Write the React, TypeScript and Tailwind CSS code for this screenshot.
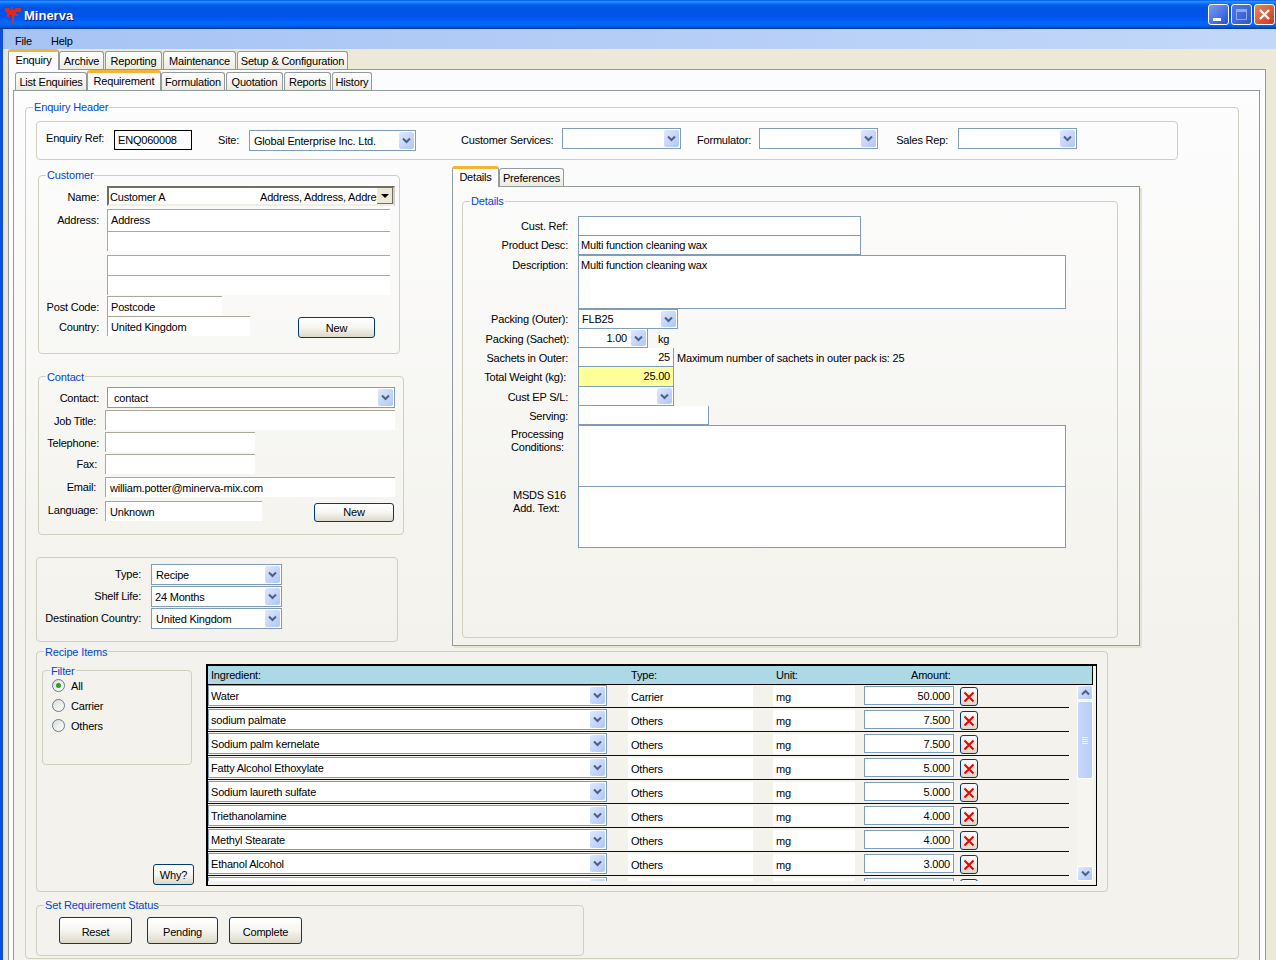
import React from 'react';

const cx = (...c: (string | undefined)[]) => c.filter(Boolean).join(' ');

function Chevron({ up = false }: { up?: boolean }) {
  return (
    <svg width="9" height="7" viewBox="0 0 9 7" className={up ? 'rotate-180' : ''}>
      <path d="M1 1.5 L4.5 5 L8 1.5" fill="none" stroke="#4d6185" strokeWidth="2" />
    </svg>
  );
}

function Combo({ className, text, textClass = 'pl-[2px]' }: { className?: string; text?: string; textClass?: string }) {
  return (
    <div className={cx('flex items-center bg-white border border-[#7f9db9] p-px', className)}>
      <span className={cx('flex-1 min-w-0 overflow-hidden whitespace-nowrap pt-px', textClass)}>{text}</span>
      <span className="flex items-center justify-center w-[15px] h-full shrink-0 rounded-[2px] bg-gradient-to-br from-[#dfe8fd] to-[#b0c6f6]">
        <Chevron />
      </span>
    </div>
  );
}

function Sunken({ className, text }: { className?: string; text?: string }) {
  return (
    <div className={cx('flex items-center bg-white border-t border-l border-[#aca899] whitespace-nowrap', className ?? '')}>
      {text}
    </div>
  );
}

function Box({ className, text }: { className?: string; text?: string }) {
  return (
    <div className={cx('bg-white border border-[#7f9db9] px-[2px] whitespace-nowrap', className)}>
      {text}
    </div>
  );
}

function Label({ className, text }: { className?: string; text: string }) {
  return <div className={cx('text-right whitespace-nowrap shrink-0', className)}>{text}</div>;
}

function Button({ className, text }: { className?: string; text: string }) {
  return (
    <div className={cx('flex items-center justify-center border border-[#003c74] rounded-[3px] bg-gradient-to-b from-white via-[#f6f5f0] to-[#dcd8ca]', className)}>
      {text}
    </div>
  );
}

function Group({ title, className, high, children }: { title: string; className?: string; high?: boolean; children?: React.ReactNode }) {
  return (
    <fieldset className={cx('block border border-[#d0d0bf] rounded-[4px] min-w-0', className)}>
      <legend className={cx('ml-[7px] pl-px pr-px text-[#0046d5] tracking-[-0.15px] whitespace-nowrap', high ? 'pt-px leading-[13px]' : 'pt-[2px] leading-[12px]')}>{title}</legend>
      {children}
    </fieldset>
  );
}

function Tab({ text, active, className }: { text: string; active?: boolean; className?: string }) {
  if (active) {
    return (
      <div className={cx('relative z-10 -mb-px flex items-center justify-center pb-[2px] border-x border-[#919b9c] rounded-t-[3px] bg-[#fcfcfe] border-t-[3px] border-t-[#f5b432] whitespace-nowrap', className)}>
        {text}
      </div>
    );
  }
  return (
    <div className={cx('flex items-center justify-center border-x border-t border-[#919b9c] rounded-t-[3px] bg-gradient-to-b from-white to-[#ecebe0] whitespace-nowrap self-end', className)}>
      {text}
    </div>
  );
}

function Radio({ text, checked }: { text: string; checked?: boolean }) {
  return (
    <div className="flex items-center h-4 mb-1 pl-[9px]">
      <span className="flex items-center justify-center w-[13px] h-[13px] rounded-full border border-[#5d7e9c] bg-gradient-to-br from-[#dcdcd5] to-white">
        {checked && <span className="w-[5px] h-[5px] rounded-full bg-[#21a121]" />}
      </span>
      <span className="ml-[6px] pt-px">{text}</span>
    </div>
  );
}

const items = [
  ['Water', 'Carrier', '50.000'],
  ['sodium palmate', 'Others', '7.500'],
  ['Sodium palm kernelate', 'Others', '7.500'],
  ['Fatty Alcohol Ethoxylate', 'Others', '5.000'],
  ['Sodium laureth sulfate', 'Others', '5.000'],
  ['Triethanolamine', 'Others', '4.000'],
  ['Methyl Stearate', 'Others', '4.000'],
  ['Ethanol Alcohol', 'Others', '3.000'],
  ['', '', ''],
];

function ItemRow({ name, type, amount }: { name: string; type: string; amount: string }) {
  return (
    <div className="flex items-start w-[861px] h-[23px] mb-px border-b border-[#000080]">
      <Combo className="w-[399px] h-[21px]" text={name} textClass="pl-px" />
      <div className="ml-[21px] mt-px pl-[3px] pt-[2px] flex items-center w-[125px] h-[20px] bg-white">{type}</div>
      <div className="ml-[20px] mt-px pl-[3px] pt-[2px] flex items-center w-[82px] h-[20px] bg-white">{type ? 'mg' : ''}</div>
      <div className="ml-[9px] mt-px pr-[3px] w-[90px] h-[19px] text-right bg-white border border-[#7f9db9] leading-[18px]">{amount}</div>
      <div className="ml-[6px] mt-[2px] flex items-center justify-center w-[18px] h-[19px] rounded-[3px] border border-[#003c74] bg-gradient-to-b from-white to-[#dcd8ca]">
        <svg width="12" height="12" viewBox="0 0 12 12">
          <path d="M1.5 1.5 L10.5 10.5 M10.5 1.5 L1.5 10.5" stroke="#f00000" strokeWidth="2" />
        </svg>
      </div>
    </div>
  );
}

function ScrollBtn({ up }: { up?: boolean }) {
  return (
    <div className="flex items-center justify-center h-[15px] rounded-[2px] border border-white bg-gradient-to-br from-[#dfe8fd] to-[#b0c6f6]">
      <Chevron up={up} />
    </div>
  );
}

function WinBtn({ className, children }: { className?: string; children?: React.ReactNode }) {
  return (
    <div className={cx('flex items-center justify-center w-[21px] h-[21px] rounded-[3px] border border-white', className)}>
      {children}
    </div>
  );
}

export default function App() {
  return (
    <div className="flex flex-col w-[1276px] h-[960px] overflow-hidden text-black text-[11px] tracking-[-0.2px] leading-[14px] [font-family:'Liberation_Sans',sans-serif]">
      {/* title bar */}
      <div className="flex items-center h-[29px] pl-[5px] pr-px shrink-0 bg-[linear-gradient(to_bottom,#0058ee_0%,#3593ff_6%,#127dff_10%,#0262ee_16%,#0054e3_28%,#0055eb_56%,#005bf5_68%,#026afe_78%,#0062ef_88%,#0052d6_94%,#003092_100%)]">
        <svg width="16" height="18" viewBox="0 0 16 18" className="shrink-0 mt-px">
          <path d="M0 2h5v2h1V1h2v3h2V2h6v4h-5v2h2v2H9v8H7V9H4v2H2V6H0z" fill="#e0281f" />
        </svg>
        <span className="ml-[3px] mt-[3px] text-[13px] tracking-[0px] font-bold text-white [text-shadow:1px_1px_#0f1089]">Minerva</span>
        <div className="ml-auto flex gap-[2px]">
          <WinBtn className="bg-gradient-to-br from-[#7c9bf0] to-[#2450d8]">
            <span className="mt-[9px] mr-[3px] w-[8px] h-[3px] bg-white" />
          </WinBtn>
          <WinBtn className="border-[#7b9fe8] bg-gradient-to-br from-[#5279e4] to-[#2f58cf]">
            <span className="w-[11px] h-[11px] border border-[#8fa8ea] border-t-[3px]" />
          </WinBtn>
          <WinBtn className="bg-gradient-to-br from-[#e9855f] to-[#c7341a]">
            <svg width="13" height="13" viewBox="0 0 13 13">
              <path d="M2 2 L11 11 M11 2 L2 11" stroke="#fff" strokeWidth="2.4" />
            </svg>
          </WinBtn>
        </div>
      </div>

      <div className="flex flex-1 min-h-0">
        <div className="w-[3px] shrink-0 bg-[#0b50e6]" />
        <div className="flex flex-col flex-1 min-w-0">
          {/* menu */}
          <div className="flex items-center h-[20px] pl-[12px] pt-[4px] gap-[19px] shrink-0 bg-gradient-to-r from-[#a6c3f4] to-[#c3d8f9]">
            <span>File</span>
            <span>Help</span>
          </div>

          <div className="flex flex-col flex-1 min-h-0 pl-[5px] pr-[10px] bg-[#ece9d8]">
            {/* outer tabs */}
            <div className="flex h-[20px] shrink-0 gap-px">
              <Tab text="Enquiry" active className="w-[51px] h-[21px] -mr-px" />
              <Tab text="Archive" className="w-[45px] h-[18px]" />
              <Tab text="Reporting" className="w-[57px] h-[18px]" />
              <Tab text="Maintenance" className="w-[73px] h-[18px]" />
              <Tab text="Setup & Configuration" className="w-[111px] h-[18px]" />
            </div>

            <div className="flex-1 min-h-0 pl-[4px] pr-[5px] border border-[#919b9c] border-b-0 bg-[#fcfcfe]">
              {/* inner tabs */}
              <div className="flex h-[20px] gap-px pl-[2px]">
                <Tab text="List Enquiries" className="w-[72px] h-[18px] -mr-px" />
                <Tab text="Requirement" active className="w-[74px] h-[20px] -mr-px" />
                <Tab text="Formulation" className="w-[64px] h-[18px]" />
                <Tab text="Quotation" className="w-[57px] h-[18px]" />
                <Tab text="Reports" className="w-[47px] h-[18px]" />
                <Tab text="History" className="w-[40px] h-[18px]" />
              </div>

              <div className="h-[880px] pl-[11px] pt-[9px] border border-[#919b9c] border-b-0 bg-[linear-gradient(to_bottom,#fdfdfe,#f3f2ec_62%)]">
                <Group title="Enquiry Header" high className="w-[1214px] h-[859px]">
                  {/* header strip */}
                  <div className="flex items-start ml-[10px] mt-[7px] w-[1142px] h-[39px] border border-[#d0d0bf] rounded-[4px]">
                    <Label text="Enquiry Ref:" className="ml-[9px] mt-[9px] w-[58px]" />
                    <div className="ml-[10px] mt-[8px] w-[78px] h-[20px] pl-[3px] border border-black leading-[18px]">ENQ060008</div>
                    <Label text="Site:" className="ml-[26px] mt-[11px] w-[21px]" />
                    <Combo className="ml-[10px] mt-[8px] w-[167px] h-[21px]" text="Global Enterprise Inc. Ltd." textClass="pl-[3px]" />
                    <Label text="Customer Services:" className="ml-[45px] mt-[11px] w-[91px]" />
                    <Combo className="ml-[10px] mt-[6px] w-[119px] h-[21px]" />
                    <Label text="Formulator:" className="ml-[16px] mt-[11px] w-[52px]" />
                    <Combo className="ml-[10px] mt-[6px] w-[119px] h-[21px]" />
                    <Label text="Sales Rep:" className="ml-[18px] mt-[11px] w-[52px]" />
                    <Combo className="ml-[10px] mt-[6px] w-[119px] h-[21px]" />
                  </div>

                  <div className="flex h-[484px]">
                    {/* left column */}
                    <div className="w-[426px] pt-[8px] shrink-0">
                      <Group title="Customer" high className="ml-[12px] w-[362px] h-[186px]">
                        <div className="pt-[4px]">
                          <div className="flex items-center h-[20px]">
                            <Label text="Name:" className="w-[60px] pt-px" />
                            <div className="relative flex items-center ml-[8px] w-[288px] h-[20px] bg-white border-2 border-t-[#716f64] border-l-[#716f64] border-r-[#d4d0c8] border-b-[#f1efe2]">
                              <span className="pl-px pt-px">Customer A</span>
                              <span className="absolute left-[151px] right-[16px] top-[2px] overflow-hidden whitespace-nowrap">Address, Address, Address</span>
                              <span className="absolute right-0 top-0 flex items-center justify-center w-[16px] h-[16px] bg-[#ece9d8] border-r border-b border-[#716f64]">
                                <span className="border-x-[4px] border-x-transparent border-t-[4px] border-t-black" />
                              </span>
                            </div>
                          </div>
                          <div className="flex items-center h-[22px] mt-[3px]">
                            <Label text="Address:" className="w-[60px] -mt-px" />
                            <Sunken className="ml-[8px] pl-[3px] pb-[2px] w-[283px] h-[22px]" text="Address" />
                          </div>
                          <Sunken className="ml-[68px] w-[283px] h-[20px]" />
                          <Sunken className="ml-[68px] mt-[4px] w-[283px] h-[20px]" />
                          <Sunken className="ml-[68px] w-[283px] h-[20px]" />
                          <div className="flex items-center h-[20px] mt-px">
                            <Label text="Post Code:" className="w-[60px] pt-px" />
                            <Sunken className="ml-[8px] pl-[3px] w-[115px] h-[20px]" text="Postcode" />
                          </div>
                          <div className="flex items-center h-[20px]">
                            <Label text="Country:" className="w-[60px] pt-px" />
                            <Sunken className="ml-[8px] pl-[3px] w-[143px] h-[20px]" text="United Kingdom" />
                            <Button text="New" className="ml-[48px] mt-[2px] pt-px w-[77px] h-[21px] shrink-0" />
                          </div>
                        </div>
                      </Group>

                      <Group title="Contact" className="ml-[12px] mt-[15px] w-[366px] h-[166px]">
                        <div className="pt-[4px]">
                          <div className="flex items-center h-[21px]">
                            <Label text="Contact:" className="w-[60px]" />
                            <Combo className="ml-[8px] w-[288px] h-[21px]" text="contact" textClass="pl-[5px]" />
                          </div>
                          <div className="flex items-center h-[20px] mt-[2px]">
                            <Label text="Job Title:" className="w-[57px] pt-px" />
                            <Sunken className="ml-[9px] w-[290px] h-[20px]" />
                          </div>
                          <div className="flex items-center h-[20px] mt-[2px]">
                            <Label text="Telephone:" className="w-[60px] pt-[2px]" />
                            <Sunken className="ml-[6px] w-[150px] h-[20px]" />
                          </div>
                          <div className="flex items-center h-[20px] mt-[2px]">
                            <Label text="Fax:" className="w-[58px] -mt-px" />
                            <Sunken className="ml-[8px] w-[150px] h-[20px]" />
                          </div>
                          <div className="flex items-center h-[20px] mt-[3px]">
                            <Label text="Email:" className="w-[57px]" />
                            <Sunken className="ml-[9px] pl-[4px] w-[290px] h-[20px]" text="william.potter@minerva-mix.com" />
                          </div>
                          <div className="flex items-center h-[20px] mt-[4px]">
                            <Label text="Language:" className="w-[59px] -mt-[3px]" />
                            <Sunken className="ml-[7px] pl-[4px] w-[157px] h-[20px]" text="Unknown" />
                            <Button text="New" className="ml-[52px] mt-[2px] w-[80px] h-[19px] shrink-0" />
                          </div>
                        </div>
                      </Group>

                      <div className="ml-[10px] mt-[22px] w-[362px] h-[85px] pt-[6px] border border-[#d0d0bf] rounded-[4px]">
                        <div className="flex items-center h-[21px]">
                          <Label text="Type:" className="w-[104px] -mt-[1px]" />
                          <Combo className="ml-[10px] w-[131px] h-[21px]" text="Recipe" textClass="pl-[3px]" />
                        </div>
                        <div className="flex items-center h-[21px] mt-px">
                          <Label text="Shelf Life:" className="w-[104px] -mt-[1px]" />
                          <Combo className="ml-[10px] w-[131px] h-[21px]" text="24 Months" />
                        </div>
                        <div className="flex items-center h-[21px] mt-px">
                          <Label text="Destination Country:" className="w-[104px] -mt-[1px]" />
                          <Combo className="ml-[10px] w-[131px] h-[21px]" text="United Kingdom" textClass="pl-[3px]" />
                        </div>
                      </div>
                    </div>

                    {/* right column */}
                    <div className="pt-[6px]">
                      <div className="flex h-[20px]">
                        <Tab text="Details" active className="w-[47px] h-[21px]" />
                        <Tab text="Preferences" className="w-[65px] h-[18px]" />
                      </div>
                      <div className="w-[688px] h-[460px] pl-[9px] pt-[7px] border border-[#919b9c] shadow-[2px_2px_0_#e6e3d3]">
                        <Group title="Details" high className="w-[656px] h-[444px]">
                          <div className="pt-[8px]">
                            <div className="flex items-center h-[20px]">
                              <Label text="Cust. Ref:" className="w-[105px]" />
                              <Box className="ml-[10px] w-[283px] h-[20px]" />
                            </div>
                            <div className="flex items-center h-[20px] -mt-px">
                              <Label text="Product Desc:" className="w-[105px]" />
                              <Box className="ml-[10px] w-[283px] h-[20px] leading-[18px]" text="Multi function cleaning wax" />
                            </div>
                            <div className="flex items-start h-[54px]">
                              <Label text="Description:" className="w-[105px] mt-[3px]" />
                              <Box className="ml-[10px] w-[488px] h-[54px] pt-[2px]" text="Multi function cleaning wax" />
                            </div>
                            <div className="flex items-center h-[20px]">
                              <Label text="Packing (Outer):" className="w-[105px]" />
                              <Combo className="ml-[10px] w-[100px] h-[20px]" text="FLB25" textClass="pl-[2px] -mt-px" />
                            </div>
                            <div className="flex items-center h-[19px]">
                              <Label text="Packing (Sachet):" className="w-[106px] pt-px" />
                              <div className="ml-[9px] flex items-center w-[70px] h-[19px] bg-white border border-[#7f9db9] border-t-0 p-px">
                                <span className="flex-1 text-right pr-[4px]">1.00</span>
                                <span className="flex items-center justify-center w-[15px] h-full rounded-[2px] bg-gradient-to-br from-[#dfe8fd] to-[#b0c6f6]"><Chevron /></span>
                              </div>
                              <span className="ml-[10px]">kg</span>
                            </div>
                            <div className="flex items-center h-[19px]">
                              <Label text="Sachets in Outer:" className="w-[105px]" />
                              <div className="ml-[10px] w-[96px] h-[19px] bg-white border border-[#7f9db9] border-t-0 text-right pr-[3px] leading-[18px]">25</div>
                              <span className="ml-[3px] whitespace-nowrap">Maximum number of sachets in outer pack is: 25</span>
                            </div>
                            <div className="flex items-center h-[20px]">
                              <Label text="Total Weight (kg):" className="w-[103px]" />
                              <div className="ml-[12px] w-[96px] h-[20px] bg-[#ffff99] border border-[#7f9db9] border-t-0 text-right pr-[3px] leading-[19px]">25.00</div>
                            </div>
                            <div className="flex items-center h-[19px]">
                              <Label text="Cust EP S/L:" className="w-[105px]" />
                              <div className="ml-[10px] flex justify-end w-[96px] h-[19px] bg-white border border-[#7f9db9] border-t-0 p-px">
                                <span className="flex items-center justify-center w-[15px] h-full rounded-[2px] bg-gradient-to-br from-[#dfe8fd] to-[#b0c6f6]"><Chevron /></span>
                              </div>
                            </div>
                            <div className="flex items-center h-[19px]">
                              <Label text="Serving:" className="w-[105px]" />
                              <Box className="ml-[10px] w-[131px] h-[19px] border-t-0" />
                            </div>
                            <div className="flex items-start h-[61px]">
                              <div className="ml-[48px] w-[57px] mt-[3px] leading-[13px]">Processing<br />Conditions:</div>
                              <Box className="ml-[10px] w-[488px] h-[62px]" />
                            </div>
                            <div className="flex items-start h-[62px]">
                              <div className="ml-[50px] w-[55px] mt-[3px] leading-[13px]">MSDS S16<br />Add. Text:</div>
                              <Box className="ml-[10px] w-[488px] h-[62px]" />
                            </div>
                          </div>
                        </Group>
                      </div>
                    </div>
                  </div>

                  {/* recipe items */}
                  <Group title="Recipe Items" className="ml-[10px] w-[1072px] h-[248px]">
                    <div className="flex">
                      <div className="w-[169px] shrink-0 pt-[5px]">
                        <Group title="Filter" className="ml-[5px] w-[150px] h-[102px]">
                          <Radio text="All" checked />
                          <Radio text="Carrier" />
                          <Radio text="Others" />
                        </Group>
                        <Button text="Why?" className="ml-[116px] mt-[99px] pt-px w-[41px] h-[21px]" />
                      </div>
                      <div className="mt-[6px] w-[891px] h-[222px] border border-black border-t-2 border-l-2 bg-[#f3f2ec]">
                        <div className="flex w-[885px] h-[19px] bg-[#add8e6] border-r border-b border-black leading-[18px]">
                          <span className="ml-[3px] w-[420px]">Ingredient:</span>
                          <span className="w-[145px]">Type:</span>
                          <span className="w-[135px]">Unit:</span>
                          <span>Amount:</span>
                        </div>
                        <div className="flex">
                          <div className="w-[869px] h-[196px] overflow-hidden">
                            {items.map((it, i) => (
                              <ItemRow key={i} name={it[0]} type={it[1]} amount={it[2]} />
                            ))}
                          </div>
                          <div className="flex flex-col w-[16px] h-[196px] bg-[#f6f5f0]">
                            <ScrollBtn up />
                            <div className="flex items-center justify-center mt-px h-[78px] rounded-[2px] border border-white bg-gradient-to-r from-[#c9d8fb] to-[#b9cdf8]">
                              <div className="flex flex-col gap-px w-[6px]">
                                <span className="h-px bg-[#eef3fe]" />
                                <span className="h-px bg-[#eef3fe]" />
                                <span className="h-px bg-[#eef3fe]" />
                                <span className="h-px bg-[#eef3fe]" />
                              </div>
                            </div>
                            <div className="flex-1" />
                            <ScrollBtn />
                          </div>
                        </div>
                      </div>
                    </div>
                  </Group>

                  <Group title="Set Requirement Status" high className="ml-[10px] mt-[6px] w-[548px] h-[58px]">
                    <div className="flex pl-[22px] pt-[5px]">
                      <Button text="Reset" className="pt-[2px] w-[73px] h-[27px]" />
                      <Button text="Pending" className="ml-[15px] pt-[2px] w-[71px] h-[27px]" />
                      <Button text="Complete" className="ml-[11px] pt-[2px] w-[73px] h-[27px]" />
                    </div>
                  </Group>
                </Group>
              </div>
            </div>
          </div>
        </div>
      </div>
    </div>
  );
}
